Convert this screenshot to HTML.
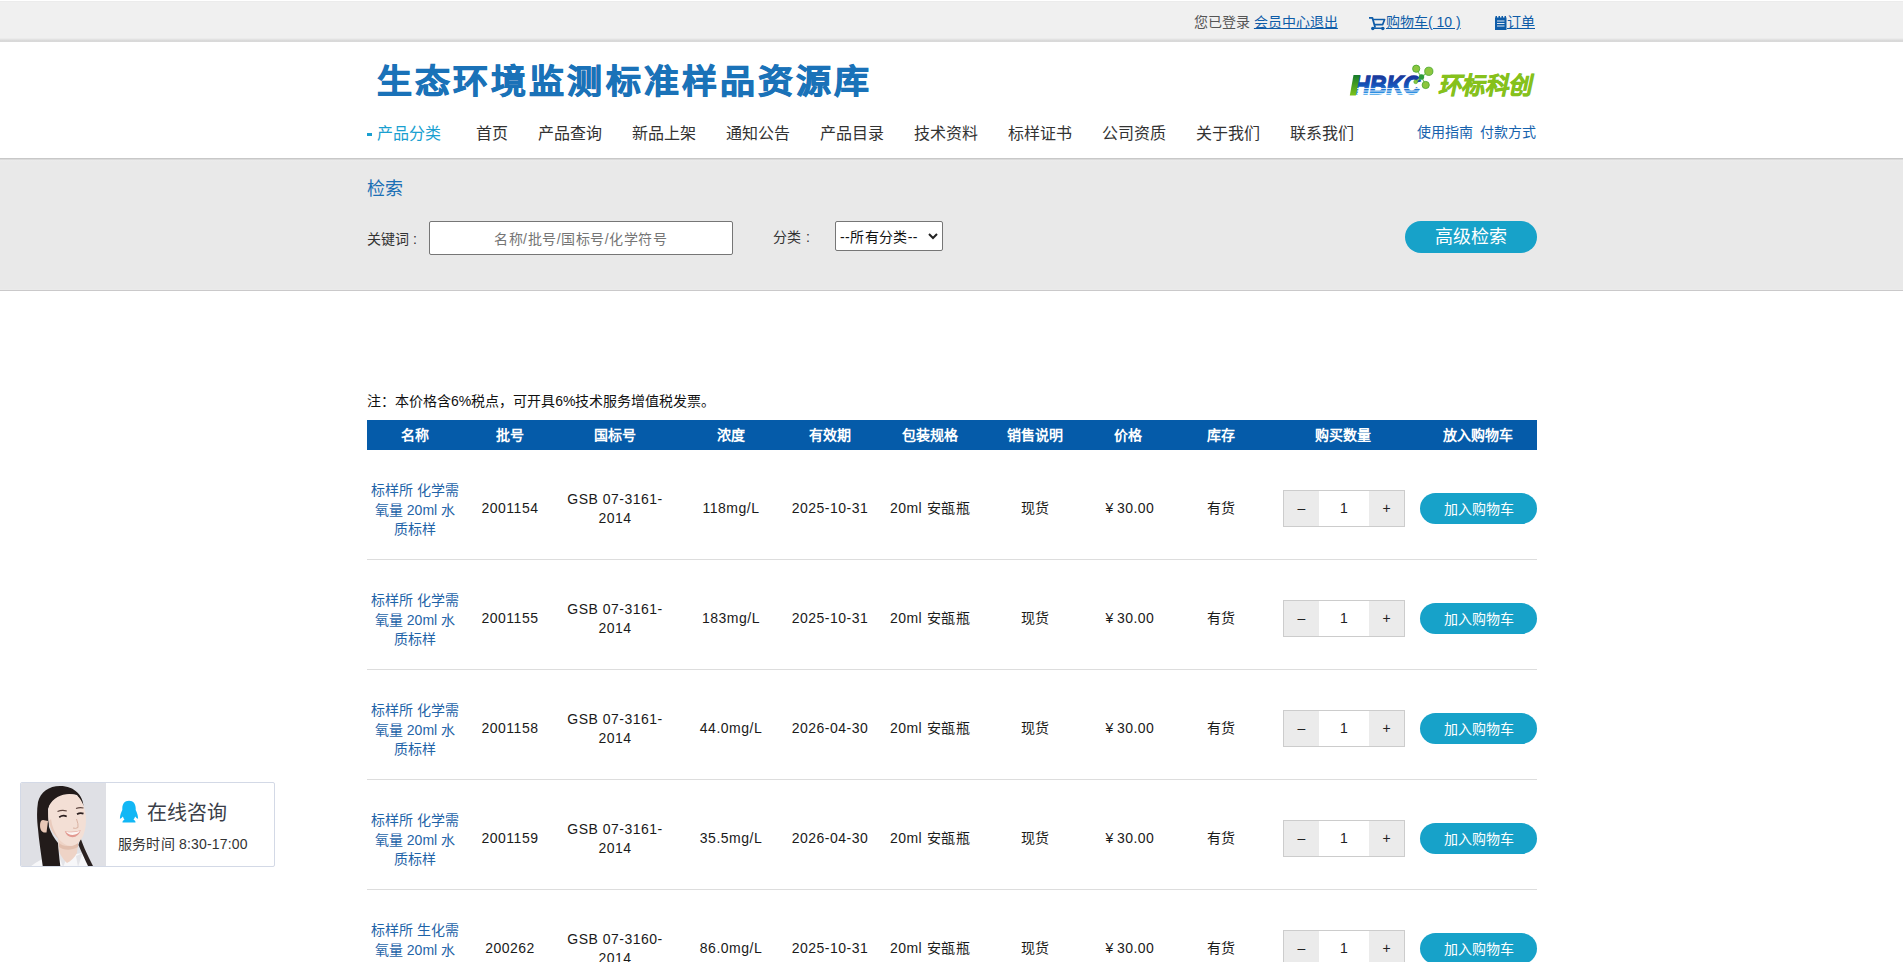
<!DOCTYPE html>
<html lang="zh-CN">
<head>
<meta charset="utf-8">
<title>生态环境监测标准样品资源库</title>
<style>
*{margin:0;padding:0;box-sizing:border-box;}
html,body{width:1903px;height:962px;overflow:hidden;background:#fff;}
body{font-family:"Liberation Sans",sans-serif;font-size:14px;color:#333;position:relative;text-spacing-trim:space-all;}
.abs{position:absolute;white-space:nowrap;}
#topbar{position:absolute;left:0;top:0;width:1903px;height:42px;background:linear-gradient(#fff 0,#fff 1px,#ececec 1px,#ececec 2px,#f0f0f0 2px,#f0f0f0 38px,#ebebeb 38px,#ebebeb 39px,#e2e2e2 39px,#e2e2e2 40px,#dadada 40px,#d9d9d9 42px);}
#topbar .t{position:absolute;top:13px;font-size:14px;line-height:18px;}
.lnk{color:#0e5ca8;text-decoration:underline;}
#header{position:absolute;left:0;top:42px;width:1903px;height:116px;background:#fff;}
#hline{position:absolute;left:0;top:158px;width:1903px;height:133px;background:linear-gradient(#c8c8c8 0,#c8c8c8 1px,#dadada 1px,#dadada 2px,#ebebeb 2px,#e9e9e9 4px,#e9e9e9 131px,#ebebeb 131px,#ebebeb 132px,#cac9ca 132px);}
.nav{position:absolute;top:124px;font-size:16px;line-height:20px;color:#333;}
.th{position:absolute;top:420px;height:30px;line-height:30px;text-align:center;color:#fff;font-weight:bold;font-size:14px;white-space:nowrap;}
.td{position:absolute;height:109px;padding-top:8px;display:flex;align-items:center;justify-content:center;text-align:center;font-size:14px;line-height:19px;color:#1a1a1a;letter-spacing:0.5px;}
.td.name{color:#1f64a8;padding:12px 4px 0;line-height:19.5px;letter-spacing:0;}
.qty{position:absolute;left:1283px;width:122px;height:37px;border:1px solid #ccc;display:flex;font-size:14px;color:#222;}
.qty span{display:block;height:35px;line-height:35.5px;text-align:center;}
.qty .m,.qty .p{width:35px;background:#ebebeb;}
.qty .v{width:50px;background:#fff;}
.btn{position:absolute;left:1420px;width:117px;height:31px;border-radius:15.5px;background:#17a2c9;color:#fff;font-size:14px;line-height:31px;padding-top:1px;text-align:center;}
</style>
</head>
<body>
<div id="topbar">
  <div class="t" style="left:1194px;color:#555;">您已登录 <span class="lnk">会员中心退出</span></div>
  <svg class="abs" style="left:1369px;top:16px" width="17" height="15" viewBox="0 0 17 15"><path d="M0.3 1.8 H3.4 L6 11" fill="none" stroke="#0e5ca8" stroke-width="1.8" stroke-linecap="round" stroke-linejoin="round"/><path d="M4.2 3.5 H15.6 L13.6 8.6 H5.7" fill="none" stroke="#0e5ca8" stroke-width="1.7" stroke-linejoin="round"/><path d="M3.4 12.2 H14.6" stroke="#0e5ca8" stroke-width="1.6" stroke-linecap="round"/><circle cx="3.8" cy="12.5" r="1.7" fill="#0e5ca8"/><circle cx="13.8" cy="12.5" r="1.7" fill="#0e5ca8"/></svg>
  <div class="t lnk" style="left:1386px;">购物车(&nbsp;10&nbsp;)</div>
  <svg class="abs" style="left:1495px;top:16px" width="12" height="14" viewBox="0 0 12 14"><g fill="#0e5ca8"><rect x="0.5" y="0" width="1.5" height="2"/><rect x="3.5" y="0" width="1.5" height="2"/><rect x="6.5" y="0" width="1.5" height="2"/><rect x="9.5" y="0" width="1.5" height="2"/><rect x="0" y="1.5" width="11.5" height="12.5"/></g><g fill="#dfe8f2"><rect x="2" y="4.5" width="7.5" height="1"/><rect x="2" y="7" width="7.5" height="1"/><rect x="2" y="9.5" width="7.5" height="1"/></g></svg>
  <div class="t lnk" style="left:1507px;">订单</div>
</div>
<div id="header"></div>
<div id="hline"></div>

<!-- logo text -->
<div class="abs" style="left:377px;top:61px;font-size:35px;line-height:44px;font-weight:700;color:#1a72b8;letter-spacing:3.1px;-webkit-text-stroke:0.9px #1a72b8;transform:scaleY(0.94);transform-origin:0 3px;">生态环境监测标准样品资源库</div>

<!-- nav -->
<div class="abs" style="left:367px;top:133px;width:5px;height:3px;background:#1a9fd0;"></div>
<div class="nav" style="left:377px;color:#1a9fd0;">产品分类</div>
<div class="nav" style="left:476px;">首页</div>
<div class="nav" style="left:538px;">产品查询</div>
<div class="nav" style="left:632px;">新品上架</div>
<div class="nav" style="left:726px;">通知公告</div>
<div class="nav" style="left:820px;">产品目录</div>
<div class="nav" style="left:914px;">技术资料</div>
<div class="nav" style="left:1008px;">标样证书</div>
<div class="nav" style="left:1102px;">公司资质</div>
<div class="nav" style="left:1196px;">关于我们</div>
<div class="nav" style="left:1290px;">联系我们</div>
<div class="abs" style="left:1417px;top:123px;font-size:14px;line-height:18px;color:#1662ad;">使用指南</div>
<div class="abs" style="left:1480px;top:123px;font-size:14px;line-height:18px;color:#1662ad;">付款方式</div>


<!-- right logo -->
<svg class="abs" style="left:1348px;top:62px" width="190" height="38" viewBox="0 0 190 38">
  <defs>
    <linearGradient id="hb" x1="0" y1="0" x2="0" y2="1"><stop offset="0" stop-color="#1b2a8c"/><stop offset="0.5" stop-color="#1652b8"/><stop offset="0.75" stop-color="#2a8ae0"/><stop offset="1" stop-color="#5cc4f5"/></linearGradient>
    <linearGradient id="hg" x1="0" y1="0" x2="0" y2="1"><stop offset="0" stop-color="#157a2a"/><stop offset="1" stop-color="#7cc21a"/></linearGradient>
  </defs>
  <text x="5" y="32" font-family="Liberation Sans" font-weight="bold" font-style="italic" font-size="25" fill="url(#hb)" stroke="url(#hb)" stroke-width="1.3" textLength="67" lengthAdjust="spacingAndGlyphs">HBKC</text>
  <path d="M5.5 13 H12 L7.8 33.5 H1.8 Z" fill="url(#hg)"/>
  <g fill="#fff"><rect x="9" y="26" width="66" height="0.8"/><rect x="9" y="28.6" width="66" height="0.8"/><rect x="9" y="31.2" width="66" height="0.8"/></g>
  <g stroke="#7cc860" stroke-width="1.2"><line x1="68" y1="7" x2="73.5" y2="15"/><line x1="73.5" y1="15" x2="80.8" y2="9.3"/><line x1="73.5" y1="15" x2="77.7" y2="23"/><line x1="73.5" y1="15" x2="67.7" y2="19.8"/></g>
  <circle cx="68.2" cy="6.7" r="3.6" fill="#8cc63f" stroke="#4eaa30" stroke-width="0.9"/>
  <circle cx="80.8" cy="9.3" r="4.1" fill="#8cc63f" stroke="#4eaa30" stroke-width="0.9"/>
  <circle cx="73.5" cy="15" r="2.7" fill="#2a9a3a"/>
  <circle cx="67.7" cy="19.8" r="1.9" fill="#8cc63f" stroke="#4eaa30" stroke-width="0.6"/>
  <circle cx="77.7" cy="23" r="3.6" fill="#8cc63f" stroke="#4eaa30" stroke-width="0.9"/>
  <g transform="translate(90 31.5) skewX(-12)"><text x="0" y="0" font-family="Liberation Sans" font-weight="bold" font-size="24" fill="#86c11c" stroke="#86c11c" stroke-width="0.7" textLength="93" lengthAdjust="spacingAndGlyphs">环标科创</text></g>
</svg>

<!-- search -->
<div class="abs" style="left:367px;top:177px;font-size:18px;line-height:24px;color:#1a6fb5;">检索</div>
<div class="abs" style="left:367px;top:229px;font-size:14px;line-height:20px;color:#333;">关键词<span style="margin-left:4px">:</span></div>
<div class="abs" style="left:429px;top:221px;width:304px;height:34px;background:#fff;border:1px solid #767676;border-radius:2px;"></div>
<div class="abs" style="left:494px;top:229px;font-size:14px;line-height:20px;color:#757575;letter-spacing:0.55px;">名称/批号/国标号/化学符号</div>
<div class="abs" style="left:773px;top:227px;font-size:14px;line-height:20px;color:#333;">分类<span style="margin-left:5px">:</span></div>
<div class="abs" style="left:835px;top:221px;width:108px;height:30px;background:#fff;border:1px solid #767676;border-radius:2px;"></div>
<div class="abs" style="left:840px;top:227px;font-size:14px;line-height:20px;color:#111;letter-spacing:0.4px;">--所有分类--</div>
<svg class="abs" style="left:928px;top:233px" width="10" height="7" viewBox="0 0 10 7"><path d="M1 1 L5 5 L9 1" fill="none" stroke="#222" stroke-width="2"/></svg>
<div class="abs" style="left:1405px;top:221px;width:132px;height:32px;background:#17a2c9;border-radius:16px;color:#fff;font-size:18px;line-height:31px;padding-top:1px;text-align:center;">高级检索</div>

<!-- note -->
<div class="abs" style="left:367px;top:391px;font-size:14px;line-height:20px;color:#111;">注：本价格含6%税点，可开具6%技术服务增值税发票。</div>

<!-- table -->
<div class="abs" style="left:367px;top:420px;width:1170px;height:30px;background:#055ba9;"></div>
<div class="th" style="left:367px;width:96px;">名称</div>
<div class="th" style="left:463px;width:94px;">批号</div>
<div class="th" style="left:557px;width:116px;">国标号</div>
<div class="th" style="left:673px;width:116px;">浓度</div>
<div class="th" style="left:789px;width:82px;">有效期</div>
<div class="th" style="left:871px;width:118px;">包装规格</div>
<div class="th" style="left:989px;width:92px;">销售说明</div>
<div class="th" style="left:1081px;width:94px;">价格</div>
<div class="th" style="left:1175px;width:92px;">库存</div>
<div class="th" style="left:1267px;width:152px;">购买数量</div>
<div class="th" style="left:1419px;width:118px;">放入购物车</div>
<div class="abs" style="left:367px;top:559px;width:1170px;height:1px;background:#ddd;"></div>
<div class="td name" style="left:367px;width:96px;top:450px;">标样所 化学需氧量 20ml 水质标样</div>
<div class="td" style="left:463px;width:94px;top:450px;">2001154</div>
<div class="td" style="left:557px;width:116px;top:450px;">GSB 07-3161-<br>2014</div>
<div class="td" style="left:673px;width:116px;top:450px;">118mg/L</div>
<div class="td" style="left:789px;width:82px;top:450px;">2025-10-31</div>
<div class="td" style="left:871px;width:118px;top:450px;">20ml 安瓿瓶</div>
<div class="td" style="left:989px;width:92px;top:450px;">现货</div>
<div class="td" style="left:1083px;width:94px;top:450px;">¥<span style="margin-left:3px">30.00</span></div>
<div class="td" style="left:1175px;width:92px;top:450px;">有货</div>
<div class="qty" style="top:490px;"><span class="m">–</span><span class="v">1</span><span class="p">+</span></div>
<div class="btn" style="top:493px;">加入购物车</div>
<div class="abs" style="left:367px;top:669px;width:1170px;height:1px;background:#ddd;"></div>
<div class="td name" style="left:367px;width:96px;top:560px;">标样所 化学需氧量 20ml 水质标样</div>
<div class="td" style="left:463px;width:94px;top:560px;">2001155</div>
<div class="td" style="left:557px;width:116px;top:560px;">GSB 07-3161-<br>2014</div>
<div class="td" style="left:673px;width:116px;top:560px;">183mg/L</div>
<div class="td" style="left:789px;width:82px;top:560px;">2025-10-31</div>
<div class="td" style="left:871px;width:118px;top:560px;">20ml 安瓿瓶</div>
<div class="td" style="left:989px;width:92px;top:560px;">现货</div>
<div class="td" style="left:1083px;width:94px;top:560px;">¥<span style="margin-left:3px">30.00</span></div>
<div class="td" style="left:1175px;width:92px;top:560px;">有货</div>
<div class="qty" style="top:600px;"><span class="m">–</span><span class="v">1</span><span class="p">+</span></div>
<div class="btn" style="top:603px;">加入购物车</div>
<div class="abs" style="left:367px;top:779px;width:1170px;height:1px;background:#ddd;"></div>
<div class="td name" style="left:367px;width:96px;top:670px;">标样所 化学需氧量 20ml 水质标样</div>
<div class="td" style="left:463px;width:94px;top:670px;">2001158</div>
<div class="td" style="left:557px;width:116px;top:670px;">GSB 07-3161-<br>2014</div>
<div class="td" style="left:673px;width:116px;top:670px;">44.0mg/L</div>
<div class="td" style="left:789px;width:82px;top:670px;">2026-04-30</div>
<div class="td" style="left:871px;width:118px;top:670px;">20ml 安瓿瓶</div>
<div class="td" style="left:989px;width:92px;top:670px;">现货</div>
<div class="td" style="left:1083px;width:94px;top:670px;">¥<span style="margin-left:3px">30.00</span></div>
<div class="td" style="left:1175px;width:92px;top:670px;">有货</div>
<div class="qty" style="top:710px;"><span class="m">–</span><span class="v">1</span><span class="p">+</span></div>
<div class="btn" style="top:713px;">加入购物车</div>
<div class="abs" style="left:367px;top:889px;width:1170px;height:1px;background:#ddd;"></div>
<div class="td name" style="left:367px;width:96px;top:780px;">标样所 化学需氧量 20ml 水质标样</div>
<div class="td" style="left:463px;width:94px;top:780px;">2001159</div>
<div class="td" style="left:557px;width:116px;top:780px;">GSB 07-3161-<br>2014</div>
<div class="td" style="left:673px;width:116px;top:780px;">35.5mg/L</div>
<div class="td" style="left:789px;width:82px;top:780px;">2026-04-30</div>
<div class="td" style="left:871px;width:118px;top:780px;">20ml 安瓿瓶</div>
<div class="td" style="left:989px;width:92px;top:780px;">现货</div>
<div class="td" style="left:1083px;width:94px;top:780px;">¥<span style="margin-left:3px">30.00</span></div>
<div class="td" style="left:1175px;width:92px;top:780px;">有货</div>
<div class="qty" style="top:820px;"><span class="m">–</span><span class="v">1</span><span class="p">+</span></div>
<div class="btn" style="top:823px;">加入购物车</div>
<div class="abs" style="left:367px;top:999px;width:1170px;height:1px;background:#ddd;"></div>
<div class="td name" style="left:367px;width:96px;top:890px;">标样所 生化需氧量 20ml 水质标样</div>
<div class="td" style="left:463px;width:94px;top:890px;">200262</div>
<div class="td" style="left:557px;width:116px;top:890px;">GSB 07-3160-<br>2014</div>
<div class="td" style="left:673px;width:116px;top:890px;">86.0mg/L</div>
<div class="td" style="left:789px;width:82px;top:890px;">2025-10-31</div>
<div class="td" style="left:871px;width:118px;top:890px;">20ml 安瓿瓶</div>
<div class="td" style="left:989px;width:92px;top:890px;">现货</div>
<div class="td" style="left:1083px;width:94px;top:890px;">¥<span style="margin-left:3px">30.00</span></div>
<div class="td" style="left:1175px;width:92px;top:890px;">有货</div>
<div class="qty" style="top:930px;"><span class="m">–</span><span class="v">1</span><span class="p">+</span></div>
<div class="btn" style="top:933px;">加入购物车</div>

<!-- chat widget -->
<div class="abs" style="left:20px;top:782px;width:255px;height:85px;background:#fff;border:1px solid #d3d9e6;border-radius:2px;overflow:hidden;">
  <svg style="position:absolute;left:0;top:0" width="85" height="85" viewBox="0 0 85 85">
    <rect width="85" height="85" fill="#dfe0e5"/>
    <!-- shirt -->
    <path d="M8 85 C14 79 22 76 30 72 L36.5 69 L44 78 L55 71 L61.5 70 C66 74 70 79 73 85 Z" fill="#f7f7f9"/>
    <path d="M36.5 69 L42 84 L45 77 Z" fill="#e4e4e8"/>
    <path d="M61.5 70 L57 84 L55 73 Z" fill="#e4e4e8"/>
    <!-- hair back -->
    <path d="M39 3 C28 3 19.5 9 17 19 C15.5 28 16 38 17 46 C18 58 20 70 22 85 L39.5 85 C38.5 76 37.5 68 37 60 C33 55 30 50 28 44 L27 26 C32 14 44 10 56 12 L62.5 23 C62 13 54 3 39 3 Z" fill="#221b1a"/>
    <!-- right strand -->
    <path d="M59.5 55 C62 62 65 69 68 75 L73 85 L68 85 C64.5 78 61 70 57.5 62 Z" fill="#2a2120"/>
    <!-- neck -->
    <path d="M37 55 L38 68 C40 74 44 78 46 80 C50 78 54 74 56 70 L57.5 56 Z" fill="#eed3c6"/>
    <path d="M38 60 C42 64 50 64 57 60 L57 64 C50 68 42 67 38 64 Z" fill="#e2bfae"/>
    <!-- ear -->
    <path d="M22 37 C19 37 18.5 42 19.5 46 C20.5 49 23 50 25.5 49.5 L27 38 Z" fill="#e8c7b6"/>
    <!-- face -->
    <path d="M28 23 C33 13 45 9 55 12 C60 15 63 22 64.5 30 C65.5 38 65 46 62 53 C59 59 55 62.5 50 63 C45 63 40 59 37 55 C32 50 28.5 45 27.5 38 C27 32 27 27 28 23 Z" fill="#f3dfd5"/>
    <path d="M28 38 C29 46 33 52 38 56 C34 50 31 44 30 36 Z" fill="#e9cbbd"/>
    <!-- brows -->
    <path d="M36.5 28.5 Q41 26.6 45.8 28" stroke="#5e4640" stroke-width="1.1" fill="none"/>
    <path d="M55 25.6 Q58.5 24 62.5 25" stroke="#5e4640" stroke-width="1.1" fill="none"/>
    <!-- eyes -->
    <path d="M38.2 34.2 Q42 31.6 45.7 33.6" stroke="#2a1e1e" stroke-width="1.7" fill="none"/>
    <path d="M56 31.2 Q59.2 29.2 62.5 30.6" stroke="#2a1e1e" stroke-width="1.7" fill="none"/>
    <!-- nose -->
    <path d="M55.5 36 Q57.5 41 57 44.5 Q54.5 46 52 45" stroke="#d9b2a2" stroke-width="1" fill="none"/>
    <!-- smile -->
    <path d="M43.8 48.2 Q52 49.8 59.7 47.2 Q57.5 54 51.5 54.2 Q46 54 43.8 48.2 Z" fill="#e29a92"/>
    <path d="M44.8 48.7 Q52 50.3 59 47.8 Q57 51.8 51.7 52 Q47 51.8 44.8 48.7 Z" fill="#fcf5f2"/>
  </svg>
</div>
<svg class="abs" style="left:119px;top:800px" width="20" height="23" viewBox="0 0 20 23"><path d="M10 0.8 C5.5 0.8 3.5 4 3.3 8 L3.3 10 C2 12.5 1 15 0.9 18.7 C2 18.5 3 17.5 3.8 16.5 C4.5 18 5 19 5.5 19.8 C4 20.5 3.3 21.5 3.5 22.4 L16.5 22.4 C16.7 21.5 16 20.5 14.5 19.8 C15 19 15.5 18 16.2 16.5 C17 17.5 18 18.5 19.1 18.7 C19 15 18 12.5 16.7 10 L16.7 8 C16.5 4 14.5 0.8 10 0.8 Z" fill="#12b7f5"/></svg>
<div class="abs" style="left:147px;top:800px;font-size:20px;line-height:26px;color:#3a3e48;">在线咨询</div>
<div class="abs" style="left:118px;top:834px;font-size:14px;line-height:20px;color:#333;letter-spacing:0.2px;">服务时间 8:30-17:00</div>

</body>
</html>
